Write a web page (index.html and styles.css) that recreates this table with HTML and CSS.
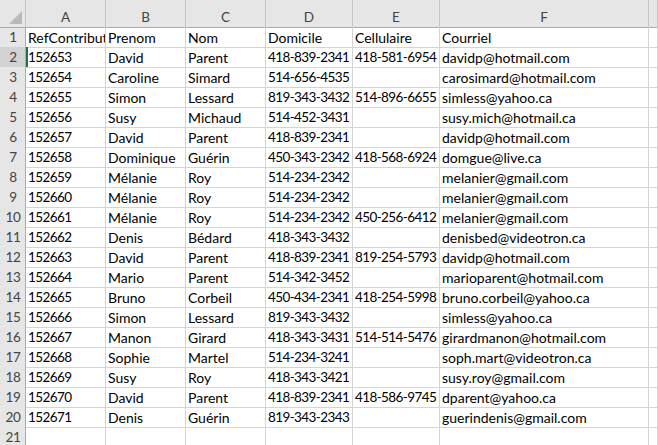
FILE: index.html
```html
<!DOCTYPE html>
<html>
<head>
<meta charset="utf-8">
<link rel="stylesheet" href="styles.css">
</head>
<body>
<div class="sheet">
  <div class="row head">
    <div class="corner"><span class="tri"></span></div>
    <div class="ch">A</div><div class="ch">B</div><div class="ch">C</div><div class="ch">D</div><div class="ch">E</div><div class="ch">F</div><div class="ch"></div>
  </div>
</div>
<script src="app.js"></script>
</body>
</html>
```
FILE: app.js
```js
const data = [
["RefContributeur","Prenom","Nom","Domicile","Cellulaire","Courriel"],
["152653","David","Parent","418-839-2341","418-581-6954","davidp@hotmail.com"],
["152654","Caroline","Simard","514-656-4535","","carosimard@hotmail.com"],
["152655","Simon","Lessard","819-343-3432","514-896-6655","simless@yahoo.ca"],
["152656","Susy","Michaud","514-452-3431","","susy.mich@hotmail.ca"],
["152657","David","Parent","418-839-2341","","davidp@hotmail.com"],
["152658","Dominique","Guérin","450-343-2342","418-568-6924","domgue@live.ca"],
["152659","Mélanie","Roy","514-234-2342","","melanier@gmail.com"],
["152660","Mélanie","Roy","514-234-2342","","melanier@gmail.com"],
["152661","Mélanie","Roy","514-234-2342","450-256-6412","melanier@gmail.com"],
["152662","Denis","Bédard","418-343-3432","","denisbed@videotron.ca"],
["152663","David","Parent","418-839-2341","819-254-5793","davidp@hotmail.com"],
["152664","Mario","Parent","514-342-3452","","marioparent@hotmail.com"],
["152665","Bruno","Corbeil","450-434-2341","418-254-5998","bruno.corbeil@yahoo.ca"],
["152666","Simon","Lessard","819-343-3432","","simless@yahoo.ca"],
["152667","Manon","Girard","418-343-3431","514-514-5476","girardmanon@hotmail.com"],
["152668","Sophie","Martel","514-234-3241","","soph.mart@videotron.ca"],
["152669","Susy","Roy","418-343-3421","","susy.roy@gmail.com"],
["152670","David","Parent","418-839-2341","418-586-9745","dparent@yahoo.ca"],
["152671","Denis","Guérin","819-343-2343","","guerindenis@gmail.com"],
["","","","","",""]
];
const sheet = document.querySelector('.sheet');
data.forEach((r, i) => {
  const row = document.createElement('div');
  row.className = 'row';
  const rh = document.createElement('div');
  rh.className = 'rh' + (i === 1 ? ' sel' : '');
  rh.textContent = i + 1;
  row.appendChild(rh);
  r.forEach((v, j) => {
    const c = document.createElement('div');
    let cls = 'cell';
    if (i > 0 && (j === 0 || j === 3 || j === 4)) cls += ' num';
    if (i === 1 && j === 0) cls += ' active';
    c.className = cls;
    c.textContent = v;
    row.appendChild(c);
  });
  const g = document.createElement('div');
  g.className = 'cell';
  row.appendChild(g);
  sheet.appendChild(row);
});
```
FILE: styles.css
```css
html, body {
  margin: 0;
  padding: 0;
  background: #ffffff;
  overflow: hidden;
}
.sheet {
  width: 658px;
  font-family: Lato, "Open Sans", sans-serif;
  font-size: 14px;
  color: #000;
}
.row {
  display: grid;
  grid-template-columns: 26px 80px 80px 80px 87px 87px 209px 1fr;
  height: 20px;
}
.row.head {
  height: 27px;
  background: #e6e6e6;
}
.corner {
  position: relative;
  border-right: 1px solid #c6c6c6;
  border-bottom: 1px solid #ababab;
}
.tri {
  position: absolute;
  right: 3px;
  bottom: 3px;
  width: 0;
  height: 0;
  border-left: 13px solid transparent;
  border-bottom: 13px solid #b9b9b9;
}
.ch {
  border-right: 1px solid #c6c6c6;
  border-bottom: 1px solid #ababab;
  text-align: center;
  line-height: 20px;
  color: #444;
  padding-top: 7px;
  box-sizing: border-box;
  font-size: 13.5px;
}
.rh {
  background: #e6e6e6;
  border-right: 1px solid #ababab;
  border-bottom: 1px solid #d4d4d4;
  text-align: center;
  color: #444;
  line-height: 20px;
  padding-left: 1px;
  font-size: 13.5px;
  letter-spacing: -0.3px;
}
.rh.sel {
  background: #d2d2d2;
}
.cell {
  border-right: 1px solid #d4d4d4;
  border-bottom: 1px solid #d4d4d4;
  line-height: 21px;
  padding-left: 2px;
  white-space: nowrap;
  overflow: hidden;
  text-overflow: clip;
}
.cell.num {
  font-size: 13.5px;
  letter-spacing: -0.6px;
}
.cell.active {
  box-shadow: inset 2px 0 0 #217346;
}
```
